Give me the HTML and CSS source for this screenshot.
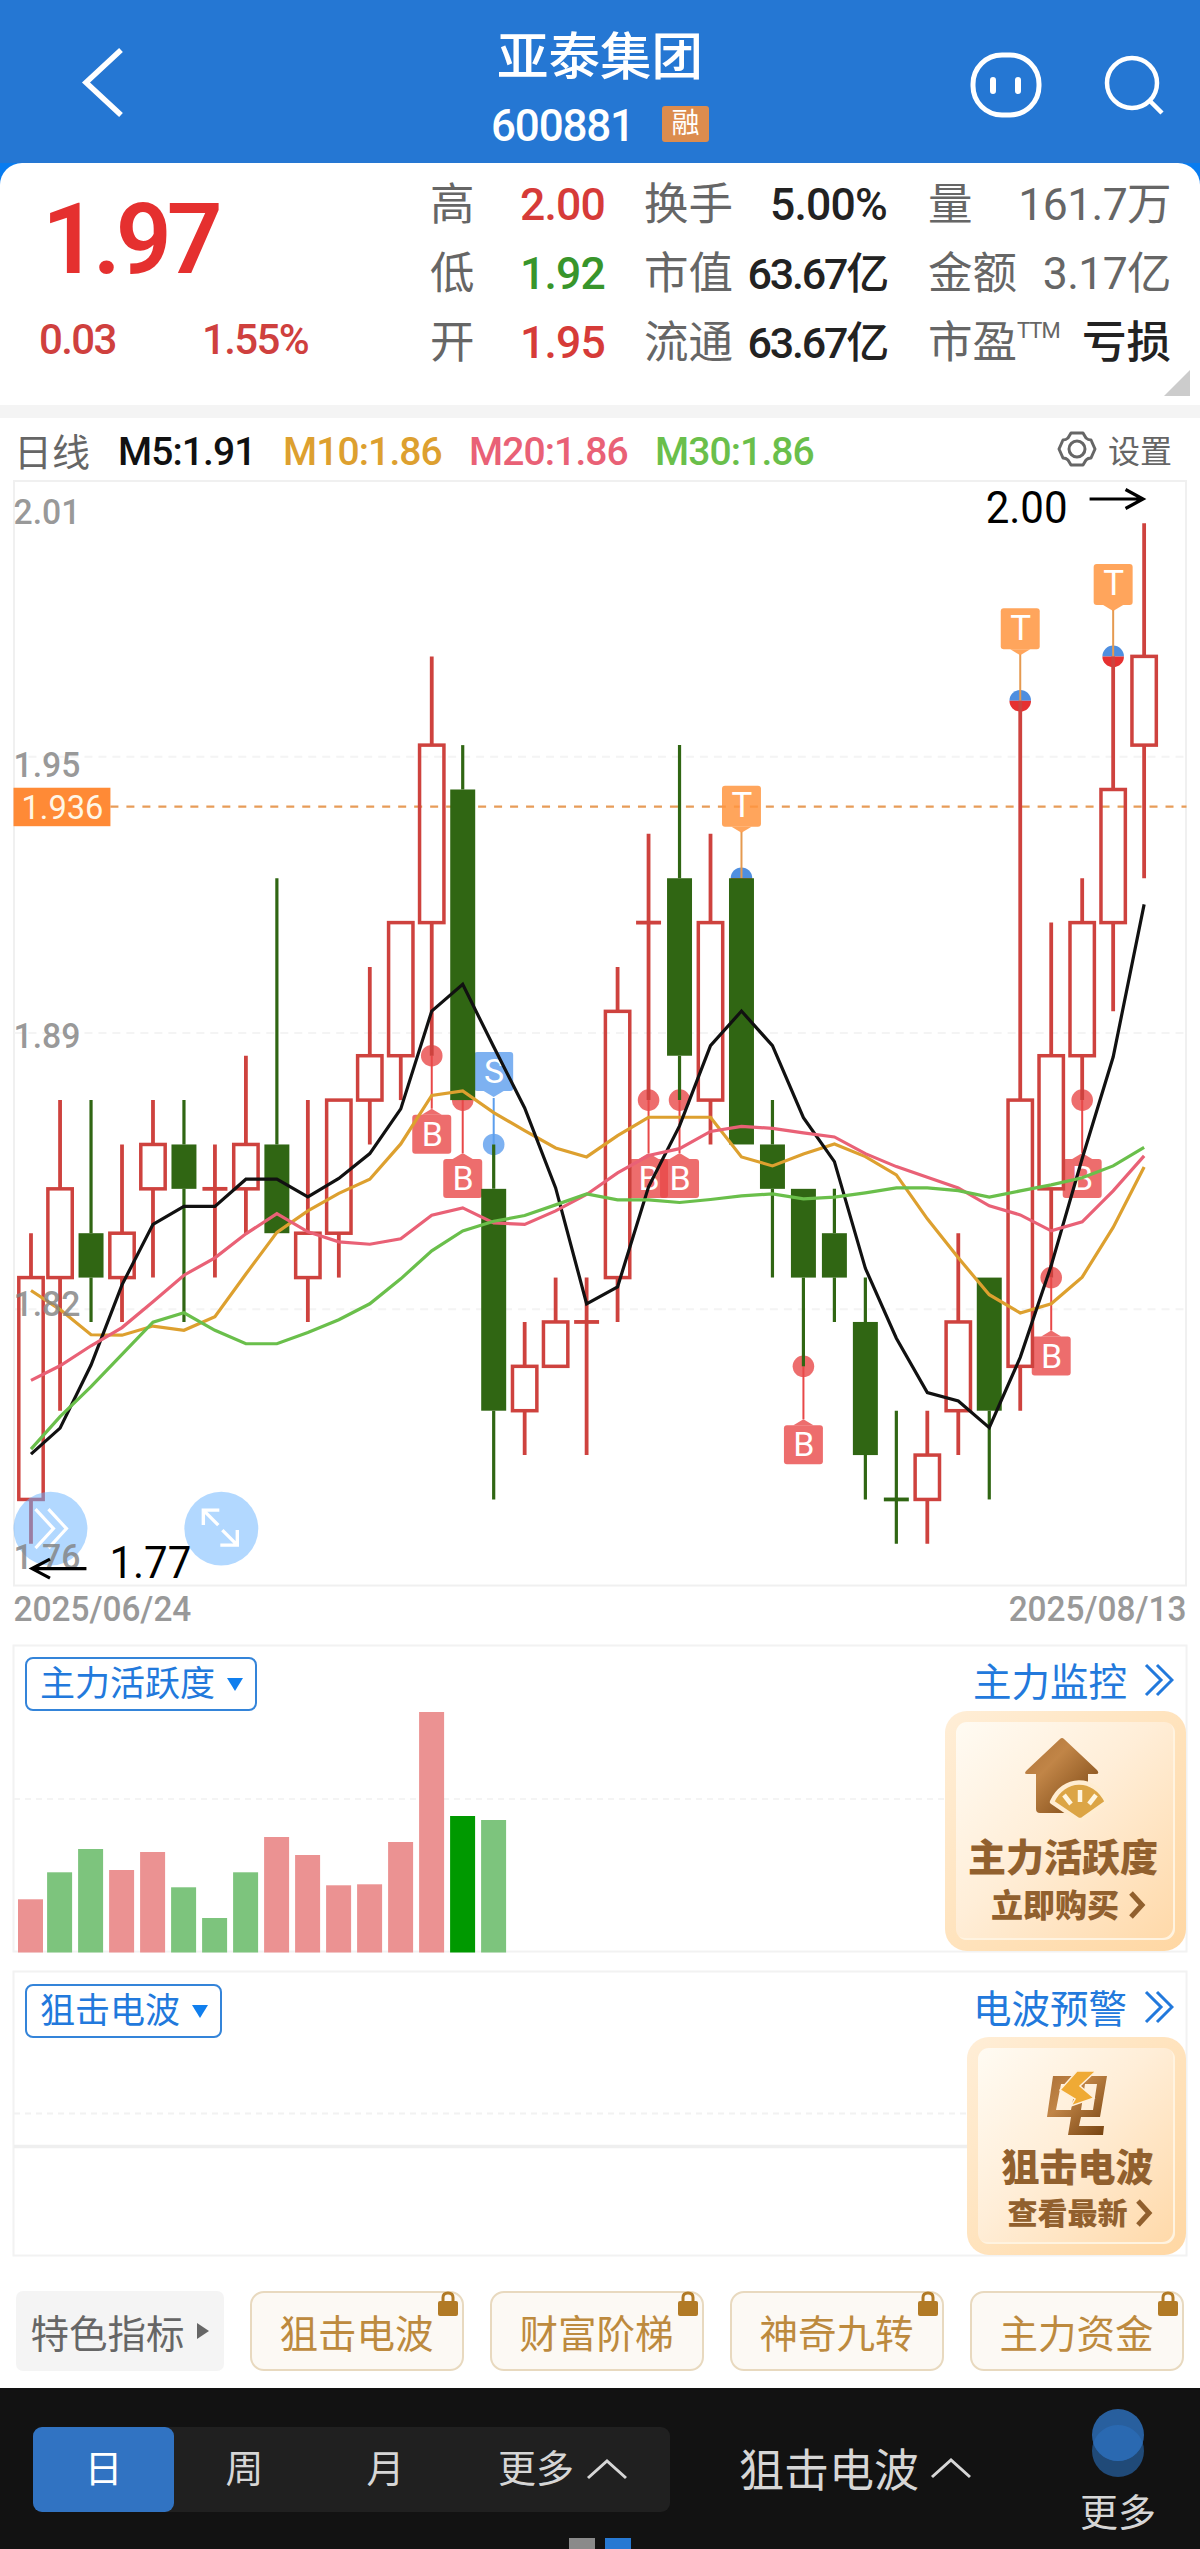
FILE: index.html
```html
<!DOCTYPE html>
<html lang="zh-CN">
<head>
	<title>亚泰集团 600881</title>
	<meta charset="utf-8">
	<link rel="stylesheet" href="styles.css">
</head>
<body>
	<div class="header">
		<svg class="back" width="48" height="72" viewBox="0 0 48 72"><path d="M42 3L7 35.500L42 68" fill="none" stroke="#fff" stroke-width="5.500"/></svg>
		<div class="title">
			<div class="name">亚泰集团</div>
			<div class="code"><span class="num">600881</span><span class="rong">融</span></div>
		</div>
		<div class="tools">
			<svg width="72" height="66" viewBox="0 0 72 66"><rect x="3" y="3" width="66" height="60" rx="29" fill="none" stroke="#fff" stroke-width="5"/><path d="M23 28v11M48 28v11" stroke="#fff" stroke-width="6" stroke-linecap="round"/></svg>
			<svg width="62" height="62" viewBox="0 0 62 62"><circle cx="28" cy="28" r="25" fill="none" stroke="#fff" stroke-width="4.500"/><path d="M46 46L58 58" stroke="#fff" stroke-width="4.500"/></svg>
		</div>
	</div>

	<div class="quote-wrap">
		<div class="quote">
			<div class="now">
				<div class="price">1.97</div>
				<div class="change"><span>0.03</span><span>1.55%</span></div>
			</div>
			<div class="col col1">
				<p><span>高</span><b class="red">2.00</b></p>
				<p><span>低</span><b class="green">1.92</b></p>
				<p><span>开</span><b class="red">1.95</b></p>
			</div>
			<div class="col col2">
				<p><span>换手</span><b>5.00%</b></p>
				<p><span>市值</span><b class="tight">63.67亿</b></p>
				<p><span>流通</span><b class="tight">63.67亿</b></p>
			</div>
			<div class="col col3">
				<p><span>量</span><b class="gray">161.7万</b></p>
				<p><span>金额</span><b class="gray">3.17亿</b></p>
				<p><span>市盈<sup>TTM</sup></span><b class="loss">亏损</b></p>
			</div>
			<span class="fold"></span>
		</div>
	</div>

	<div class="ma-bar">
		<span class="period">日线</span>
		<span class="ma m5">M5:1.91</span>
		<span class="ma m10">M10:1.86</span>
		<span class="ma m20">M20:1.86</span>
		<span class="ma m30">M30:1.86</span>
		<span class="setting">
			<svg width="40" height="38" viewBox="0 0 40 38" fill="none" stroke="#666" stroke-width="3"><path d="M14 3H26L29 8Q31 10 34 10L38 19L34 28Q31 28 29 30L26 35H14L11 30Q9 28 6 28L2 19L6 10Q9 10 11 8Z" stroke-linejoin="round"/><circle cx="20" cy="19" r="8"/></svg>
			设置
		</span>
	</div>

	<svg id="kline" class="kline" width="1200" height="1164" viewBox="0 480 1200 1164"></svg>

	<div class="panel panel1">
		<svg id="bars" class="back-draw" width="1200" height="312" viewBox="0 1643 1200 312"></svg>
		<div class="picker"><span>主力活跃度</span><i></i></div>
		<div class="side">
			<div class="link">主力监控<svg width="30" height="34" viewBox="0 0 30 34"><path d="M2 2L17 17L2 32M13 2L28 17L13 32" fill="none" stroke="#2279dc" stroke-width="3"/></svg></div>
			<div class="promo promo1">
				<svg width="84" height="84" viewBox="0 0 84 84">
					<defs><linearGradient id="wood" x1="0" y1="0" x2="1" y2="1"><stop offset="0" stop-color="#ad7238"/><stop offset=".35" stop-color="#c18547"/><stop offset="1" stop-color="#74410f"/></linearGradient></defs>
					<path d="M39 2Q41 0 43 2L76 33Q79 37 75 37H67V76H19Q15 76 15 72V37H6Q2 37 6 33Z" fill="url(#wood)"/>
					<path d="M31 65C42 40 73 38 86 65L62 82Q59 84 56 82Z" fill="#dca545" stroke="#ffedd2" stroke-width="4.500" stroke-linejoin="round"/>
					<path d="M43 58L50 67M59 53V65M75 58L68 67" stroke="#fff5df" stroke-width="4.500"/>
				</svg>
				<strong>主力活跃度</strong>
				<em>立即购买<svg width="18" height="30" viewBox="0 0 18 30"><path d="M3 3L14 15L3 27" fill="none" stroke="#91602e" stroke-width="5"/></svg></em>
			</div>
		</div>
	</div>

	<div class="panel panel2">
		<svg class="back-draw" width="1200" height="288" viewBox="0 1970 1200 288" fill="none">
			<rect x="13.500" y="1971.500" width="1173" height="284" stroke="#f2f2f2" stroke-width="2"/>
			<path d="M14 2113.500H1186" stroke="#f2f2f2" stroke-width="2" stroke-dasharray="6 5"/>
			<path d="M14 2146.500H1186" stroke="#efefef" stroke-width="3.500"/>
		</svg>
		<div class="picker"><span>狙击电波</span><i></i></div>
		<div class="side">
			<div class="link">电波预警<svg width="30" height="34" viewBox="0 0 30 34"><path d="M2 2L17 17L2 32M13 2L28 17L13 32" fill="none" stroke="#2279dc" stroke-width="3"/></svg></div>
			<div class="promo promo2">
				<svg width="62" height="68" viewBox="0 0 62 68">
					<path fill-rule="evenodd" d="M7 7H61L54 48H35L33 57H58L57 66H22L25 48H1ZM15 15L10 41H25L30 15ZM39 15L35 41H47L51 15Z" fill="url(#wood)"/>
					<path d="M31 2H50L34 17L48 29L25 37L29 30L14 21Z" fill="#efaa35" stroke="#fff0db" stroke-width="1.500"/>
				</svg>
				<strong>狙击电波</strong>
				<em>查看最新<svg width="18" height="30" viewBox="0 0 18 30"><path d="M3 3L14 15L3 27" fill="none" stroke="#91602e" stroke-width="5"/></svg></em>
			</div>
		</div>
	</div>

	<div class="tags">
		<div class="tag-more">特色指标<i></i></div>
		<div class="tag">狙击电波<svg class="lock" width="20" height="26" viewBox="0 0 20 26"><path d="M5 12V6.500Q5 2 10 2T15 6.500V12" fill="none" stroke="#b17a25" stroke-width="3"/><rect y="10" width="20" height="15" rx="2" fill="#b17a25"/></svg></div>
		<div class="tag">财富阶梯<svg class="lock" width="20" height="26" viewBox="0 0 20 26"><path d="M5 12V6.500Q5 2 10 2T15 6.500V12" fill="none" stroke="#b17a25" stroke-width="3"/><rect y="10" width="20" height="15" rx="2" fill="#b17a25"/></svg></div>
		<div class="tag">神奇九转<svg class="lock" width="20" height="26" viewBox="0 0 20 26"><path d="M5 12V6.500Q5 2 10 2T15 6.500V12" fill="none" stroke="#b17a25" stroke-width="3"/><rect y="10" width="20" height="15" rx="2" fill="#b17a25"/></svg></div>
		<div class="tag">主力资金<svg class="lock" width="20" height="26" viewBox="0 0 20 26"><path d="M5 12V6.500Q5 2 10 2T15 6.500V12" fill="none" stroke="#b17a25" stroke-width="3"/><rect y="10" width="20" height="15" rx="2" fill="#b17a25"/></svg></div>
	</div>

	<div class="footer">
		<div class="seg">
			<span class="on">日</span>
			<span>周</span>
			<span>月</span>
			<span class="wide">更多<svg width="42" height="22" viewBox="0 0 42 22"><path d="M2 20L21 3L40 20" fill="none" stroke="#d6d6d6" stroke-width="3"/></svg></span>
		</div>
		<div class="wave">狙击电波<svg width="42" height="22" viewBox="0 0 42 22"><path d="M2 20L21 3L40 20" fill="none" stroke="#d6d6d6" stroke-width="3"/></svg></div>
		<div class="more">
			<svg width="54" height="72" viewBox="0 0 54 72"><circle cx="27" cy="43" r="26" fill="#204a78"/><circle cx="27" cy="27" r="26" fill="#285f9e"/><path d="M2.300 35A26 26 0 0 1 51.700 35A26 26 0 0 1 2.300 35Z" fill="#2a69b1"/></svg>
			更多
		</div>
		<div class="dots"><i></i><i class="cur"></i></div>
	</div>
	<script src="chart.js"></script>
</body>
</html>
```

FILE: styles.css
```css
body{
	margin: 0;
	width: 1200px;
	background: #fff;
	font-family: Roboto, "Noto Sans CJK SC", sans-serif;
	color: #222;
}
p{
	margin: 0;
}
svg{
	display: block;
	flex-shrink: 0;
}
/*顶部*/
.header{
	height: 163px;
	background: #2577d3;
	color: #fff;
	display: grid;
	grid-template-columns: 1fr 300px 1fr;
}
.back{
	margin: 47px 0 0 79px;
}
.title{
	text-align: center;
}
.name{
	font-size: 51.500px;
	font-weight: 500;
	line-height: 60px;
	margin-top: 28px;
}
.code{
	display: flex;
	justify-content: center;
	align-items: center;
	height: 50px;
	margin-top: 11px;
}
.num{
	font-size: 44px;
	font-weight: 500;
	letter-spacing: -1.200px;
	margin-right: 28px;
	padding-top: 3px;
}
.rong{
	width: 47px;
	height: 36px;
	line-height: 35px;
	font-size: 28px;
	background: #dc8c4e;
	border-radius: 3px;
}
.tools{
	display: flex;
	justify-content: flex-end;
	gap: 62px;
	padding: 52px 34px 0 0;
}
.tools svg + svg{
	margin-top: 3px;
}
/*报价*/
.quote-wrap{
	background: #087cf0;
	border-bottom: 13px solid #f4f4f4;
}
.quote{
	position: relative;
	box-sizing: border-box;
	display: flex;
	height: 242px;
	padding-top: 7px;
	background: #fff;
	border-radius: 22px 22px 0 0;
}
.now{
	width: 430px;
	color: #cf403e;
}
.price{
	font-size: 98px;
	font-weight: 600;
	line-height: 100px;
	letter-spacing: -5px;
	color: #e5302f;
	margin: 20px 0 0 42px;
}
.change{
	display: flex;
	gap: 86px;
	margin: 25px 0 0 39px;
	font-size: 42px;
	font-weight: 500;
	line-height: 50px;
	letter-spacing: -1.600px;
}
.col p{
	display: flex;
	justify-content: space-between;
	height: 69px;
	line-height: 70px;
	font-size: 44.500px;
	color: #666;
	white-space: nowrap;
}
.col b{
	font-weight: 500;
	letter-spacing: -0.800px;
	color: #222;
}
.col1{
	width: 175px;
	margin-right: 39px;
}
.col2{
	width: 243px;
	margin-right: 41px;
}
.col3{
	width: 243px;
}
.col b.red{
	color: #d63b38;
}
.col b.green{
	color: #38952b;
}
.col b.gray{
	color: #666;
	font-weight: 400;
	letter-spacing: -0.600px;
}
.col b.tight{
	font-size: 43px;
	letter-spacing: -2.200px;
}
.col b.loss{
	letter-spacing: 0;
}
.col sup{
	font-size: 22px;
	letter-spacing: -1px;
	line-height: 0;
	vertical-align: 20px;
}
.fold{
	position: absolute;
	right: 10px;
	bottom: 9px;
	border-left: 26px solid transparent;
	border-bottom: 26px solid #ccc;
}
/*均线*/
.ma-bar{
	display: flex;
	align-items: center;
	height: 62px;
	padding: 0 28px 0 14px;
}
.period{
	font-size: 38px;
	color: #666;
	width: 104px;
}
.ma{
	font-size: 39px;
	font-weight: 500;
	letter-spacing: -0.900px;
	padding-top: 5px;
	width: 186px;
}
.m5{
	color: #111;
	width: 165px;
}
.m10{
	color: #dda02f;
}
.m20{
	color: #e96176;
}
.m30{
	color: #6abf4b;
}
.setting{
	display: flex;
	align-items: center;
	gap: 11px;
	margin-left: auto;
	font-size: 32px;
	color: #666;
}
.kline{
	height: 1163px;
}
.kline text{
	font-family: Roboto, sans-serif;
}
/*指标面板*/
.panel{
	display: grid;
	grid-template-columns: 1fr auto;
}
.back-draw{
	grid-area: 1 / 1 / 2 / 3;
}
.picker{
	grid-area: 1 / 1;
	justify-self: start;
	align-self: start;
	box-sizing: border-box;
	display: flex;
	align-items: center;
	height: 54px;
	margin: 14px 0 0 25px;
	padding: 0 12px 0 13px;
	border: 2.500px solid #3484d9;
	border-radius: 8px;
	background: #fff;
	color: #2279dc;
	font-size: 35px;
	line-height: 46px;
}
.picker span{
	padding-top: 2px;
}
.picker i{
	margin-left: 12px;
	border: 8px solid transparent;
	border-top: 13px solid #107fee;
	border-bottom: 0;
}
.side{
	grid-area: 1 / 2;
	display: flex;
	flex-direction: column;
	align-items: flex-end;
	margin-right: 14px;
}
.link{
	display: flex;
	align-items: center;
	gap: 17px;
	height: 68px;
	padding: 12px 12px 0 0;
	box-sizing: border-box;
	font-size: 38.500px;
	line-height: 56px;
	color: #2279dc;
}
.link svg{
	margin-bottom: 6px;
}
.promo{
	box-sizing: border-box;
	display: flex;
	flex-direction: column;
	align-items: center;
	border: 11px solid transparent;
	border-radius: 22px;
	background: linear-gradient(135deg, #fffbf3, #ffeed8 45%, #ffd9a9) padding-box, linear-gradient(135deg, #ffeed7, #ffe3bd 50%, #ffd7a3) border-box;
	box-shadow: inset -2px -2px 0 #fff3e0;
	color: #91602e;
}
.promo1{
	width: 241px;
	height: 240px;
	padding-top: 15px;
}
.promo2{
	width: 219px;
	height: 218px;
	padding-top: 21px;
}
.promo1 > svg{
	width: 84px;
	margin-right: 5px;
	overflow: visible;
}
.promo strong{
	font-size: 38px;
	font-weight: 900;
	line-height: 52px;
	margin-top: 11px;
	margin-right: 5px;
}
.promo em{
	display: flex;
	align-items: center;
	gap: 9px;
	font-style: normal;
	font-weight: 900;
	font-size: 32px;
	line-height: 44px;
	margin: 0 0 0 6px;
}
.promo em svg{
	margin-top: -2px;
}
.promo2 strong{
	margin: 5px 0 0 2px;
	line-height: 52px;
}
.promo2 em{
	font-size: 30px;
	gap: 7px;
	margin-left: 7px;
	line-height: 40px;
}
.panel1{
	height: 327px;
}
.panel2{
	height: 288px;
}
.panel2 .link{
	height: 67px;
}
/*特色指标*/
.tags{
	display: flex;
	gap: 26px;
	height: 80px;
	padding: 33px 16px 17px;
}
.tag-more, .tag{
	box-sizing: border-box;
	display: flex;
	align-items: center;
	justify-content: center;
	position: relative;
	width: 214px;
	height: 80px;
	padding-right: 1px;
	font-size: 38.500px;
}
.tag-more{
	width: 208px;
	padding-right: 1px;
	color: #666;
	background: #f4f4f4;
	border-radius: 7px;
}
.tag-more i{
	margin-left: 12px;
	border: 8px solid transparent;
	border-left: 12px solid #666;
	border-right: 0;
}
.tag{
	color: #bd8a3e;
	background: #fcf9f4;
	border: 2px solid #e8d9bf;
	border-radius: 14px;
}
.lock{
	position: absolute;
	right: 4px;
	top: -2px;
}
/*底部*/
.footer{
	position: relative;
	display: flex;
	height: 161px;
	background: #121212;
	color: #d6d6d6;
}
.seg{
	display: flex;
	width: 637px;
	height: 85px;
	margin: 39px 0 0 33px;
	background: #202020;
	border-radius: 9px;
	font-size: 38px;
	line-height: 80px;
}
.seg span{
	box-sizing: border-box;
	display: flex;
	align-items: center;
	justify-content: center;
	width: 141px;
	padding-bottom: 2px;
}
.seg .on{
	color: #fff;
	background: #3173c2;
	border-radius: 9px;
}
.seg .wide{
	width: 214px;
	gap: 12px;
}
.wave{
	display: flex;
	align-items: center;
	gap: 11px;
	height: 81px;
	margin: 39px 0 0 69px;
	font-size: 45px;
}
.more{
	display: flex;
	flex-direction: column;
	align-items: center;
	margin: 20px 0 0 108px;
	font-size: 38px;
	line-height: 66px;
}
.dots{
	position: absolute;
	left: 569px;
	bottom: 0;
	display: flex;
	gap: 10px;
}
.dots i{
	width: 26px;
	height: 11px;
	background: #8a8a8a;
}
.dots .cur{
	background: #2779d3;
}
```

FILE: chart.js
```js
var NS = "http://www.w3.org/2000/svg";
function add(box, tag, attrs, text){
	var el = document.createElementNS(NS, tag);
	for(var k in attrs){
		el.setAttribute(k, attrs[k]);
	}
	if(text != undefined){
		el.textContent = text;
	}
	box.appendChild(el);
	return el;
}
//第i根K线的中心
function cx(i){
	return i == 0 ? 30.5 : 28.6 + 31 * i;
}
//价格(分)转y坐标
function py(p){
	return 523.3 + (200 - p) * 44.41;
}
//开 收 高 低
var data = [
	[178,183,184,177],[183,185,187,180],[184,183,187,182],[183,184,186,182],[185,186,187,183],
	[186,185,187,182],[185,185,186,183],[185,186,188,184],[186,184,192,184],[183,184,187,182],
	[184,187,187,183],[187,188,190,186],[188,191,191,187],[191,195,197,188],[194,187,195,187],
	[185,180,186,178],[180,181,182,179],[181,182,183,181],[182,182,183,179],[183,189,190,182],
	[191,191,193,187],[192,188,195,187],[187,191,193,186],[192,186,192,186],[186,185,187,183],
	[185,183,185,181],[184,183,185,182],[182,179,183,178],[178,178,180,177,1],[178,179,180,177],
	[180,182,184,179],[183,180,183,178],[181,187,196,180],[185,188,191,183],[188,191,192,187],
	[191,194,197,189],[195,197,200,192]
];
var lines = {
	"#dda02f": [1290.7,1309.8,1335,1335.4,1326.3,1330.5,1317,1274.2,1232.5,1211,1193.5,1179.3,1144,1095.5,1090.9,1112.7,1130.7,1148,1157,1135.7,1117.3,1117.3,1117.3,1157,1166,1154,1144,1156.7,1175,1219,1258,1294.9,1313.2,1304,1277.3,1227.5,1167],
	"#111": [1454.5,1428.4,1365.3,1285,1224.5,1206.5,1206.5,1179.3,1179.3,1196.9,1178.5,1153.7,1108.9,1011,984.3,1046.8,1108,1188,1304,1287,1187,1126,1045.7,1011,1045.7,1117.7,1161.7,1268.5,1338.5,1392.9,1401.3,1428,1357.6,1265.8,1158.6,1057,904.3],
	"#e96176": [1380.6,1366,1346,1327.8,1302,1275.4,1258,1234,1213.7,1232,1242,1244.4,1239,1215.3,1208,1223,1224.5,1211,1194.6,1173,1155.6,1148.7,1131.5,1126.5,1128.4,1133,1137,1153.7,1166.7,1177.4,1188,1206,1215,1231,1222,1191,1156],
	"#6abf4b": [1449.5,1417,1387,1354.6,1322.4,1313,1330.5,1344,1344,1332.8,1320,1304,1279,1251,1231,1221.4,1215.7,1205,1194,1200,1200,1202.6,1199.6,1196,1194,1199,1197.3,1193,1188,1188,1190.8,1197.3,1191,1185,1177.8,1166,1147.5]
};
var k = document.getElementById("kline");
function label(x, y, str, size, w, color, weight){
	add(k, "text", {x:x, y:y, "font-size":size, textLength:w, lengthAdjust:"spacingAndGlyphs", fill:color, "font-weight":weight}, str);
}

add(k, "rect", {x:13.5, y:481, width:1173, height:1105.5, fill:"none", stroke:"#f0f0f0", "stroke-width":2});
[757,1033.5,1310].forEach(function(y){
	add(k, "path", {d:"M14 " + y + "H1186", stroke:"#f4f4f4", "stroke-width":2, "stroke-dasharray":"8 6"});
});
add(k, "path", {d:"M110 807H1187", stroke:"#e79c58", "stroke-width":2.2, "stroke-dasharray":"8 8"});

//买卖点
function mark(i, type){
	var x = cx(i);
	var up = type != "B";
	var y = py(up ? data[i][2] : data[i][3]);
	var top = up ? y - 92.5 : y + 59;
	var color = {B:"#e84848", S:"#5c9eed", T:"#ff9540"}[type];
	var op = type == "T" ? 0.85 : 0.8;
	var g = add(k, "g", {});
	if(type == "T"){
		add(g, "path", {d:"M" + (x-10.8) + " " + y + "a10.800 10.800 0 0 1 21.600 0z", fill:"#4f8fe0"});
		add(g, "path", {d:"M" + (x-10.8) + " " + y + "a10.800 10.800 0 0 0 21.600 0z", fill:"#e63131"});
	}else{
		add(g, "circle", {cx:x, cy:y, r:10.8, fill:color, opacity:op});
	}
	var tip = up ? top + 46 : top - 6;
	add(g, "path", {d:"M" + x + " " + y + "V" + tip, stroke:type == "T" ? "#e59a50" : color, "stroke-width":2});
	var h = type == "T" ? 41 : 39;
	add(g, "path", {
		d: up ? "M" + (x-10) + " " + (top+h) + "l10 6l10-6z" : "M" + (x-10) + " " + top + "l10-6l10 6z",
		fill:color, opacity:op
	});
	add(g, "rect", {x:x-19.5, y:top, width:39, height:h, rx:3, fill:color, opacity:op});
	add(g, "text", {x:x+0.5, y:top+(type == "T" ? 31.5 : 31), "font-size":type == "T" ? 35 : 34, "text-anchor":"middle", fill:"#fff"}, type);
}
[13,14,20,21,25,33,34].forEach(function(i){ mark(i, "B"); });
mark(15, "S");
[23,32,35].forEach(function(i){ mark(i, "T"); });

//K线
data.forEach(function(d, i){
	var x = cx(i);
	var green = d[1] < d[0] || d[4];
	var color = green ? "#306613" : "#ce423e";
	var top = py(Math.max(d[0], d[1]));
	var bottom = py(Math.min(d[0], d[1]));
	add(k, "path", {
		d:"M" + x + " " + py(d[2]) + "V" + top + "M" + x + " " + bottom + "V" + py(d[3]),
		stroke:color, "stroke-width":green ? 3.2 : 3.8
	});
	if(d[0] == d[1]){
		add(k, "path", {d:"M" + (x-12.5) + " " + top + "h25", stroke:color, "stroke-width":3.8});
	}else if(green){
		add(k, "rect", {x:x-12.5, y:top, width:25, height:bottom-top, fill:color});
	}else{
		add(k, "rect", {x:x-12.2, y:top, width:24.4, height:bottom-top, fill:"none", stroke:color, "stroke-width":3.5});
	}
});
for(var c in lines){
	add(k, "polyline", {
		points: lines[c].map(function(y, i){ return cx(i) + "," + (y + 0.5); }).join(" "),
		fill:"none", stroke:c, "stroke-width":3.2
	});
}

//圆形按钮
add(k, "circle", {cx:50, cy:1529.5, r:37, fill:"#6cb4ff", opacity:0.52});
add(k, "path", {d:"M35 1510L53 1529.500L35 1549M48 1510L66 1529.500L48 1549", fill:"none", stroke:"#fff", "stroke-width":3.2});
add(k, "circle", {cx:221, cy:1529.5, r:37, fill:"#6cb4ff", opacity:0.52});
add(k, "path", {d:"M218 1526L203 1511M203 1526V1511H219M222 1531L237 1546M237 1531V1546H220", fill:"none", stroke:"#fff", "stroke-width":3.4});

//刻度
[["2.01",524.5],["1.95",777.5],["1.89",1048],["1.82",1317],["1.76",1570]].forEach(function(t){
	label(13, t[1], t[0], 34.5, 67, "rgba(130,130,130,.82)", 500);
});
add(k, "rect", {x:13, y:788, width:97, height:38.5, fill:"#ff8a36"});
label(21, 819, "1.936", 33.5, 82, "#fff6e5", 400);
label(986, 523.5, "2.00", 44.5, 82, "#000", 400);
add(k, "path", {d:"M1090 499H1143M1126 489.500L1143.500 499L1126 508.500", fill:"none", stroke:"#000", "stroke-width":3.2});
label(109, 1578.5, "1.77", 43.5, 82, "#000", 400);
add(k, "path", {d:"M86 1569.500H32M49.500 1560L31.500 1569.500L49.500 1579", fill:"none", stroke:"#000", "stroke-width":3.2});
label(13, 1621.5, "2025/06/24", 34.5, 178, "#999", 500);
label(1009, 1621.5, "2025/08/13", 34.5, 178, "#999", 500);

//主力活跃度
var b = document.getElementById("bars");
add(b, "rect", {x:13.5, y:1645.5, width:1173, height:306, fill:"none", stroke:"#f2f2f2", "stroke-width":2});
add(b, "path", {d:"M14 1799H1186", stroke:"#f4f4f4", "stroke-width":2, "stroke-dasharray":"6 5"});
var tops = [1899.3,1872.3,1849,1870,1852,1887.3,1918,1872.3,1837,1855,1885.3,1884.3,1842,1712,1816,1820];
var kinds = "rggrrgggrrrrrrGg";
tops.forEach(function(y, i){
	var color = {r:"#eb9292", g:"#7dc47d", G:"#009900"}[kinds[i]];
	add(b, "rect", {x:cx(i)-12.5, y:y, width:25, height:1952.5-y, fill:color});
});
```
